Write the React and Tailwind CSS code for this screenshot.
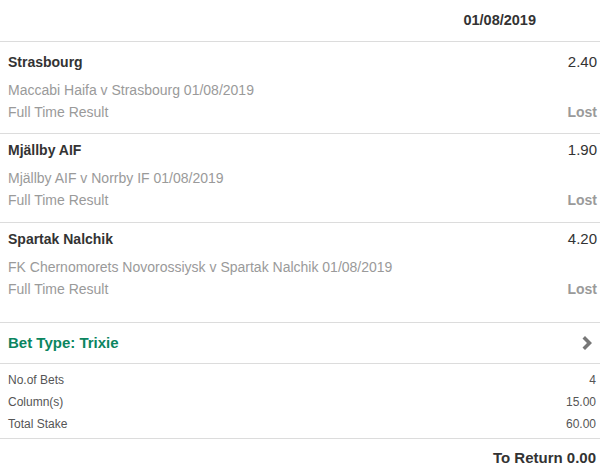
import React from "react";

const SELECTIONS = [
  {
    name: "Strasbourg",
    odds: "2.40",
    event: "Maccabi Haifa v Strasbourg 01/08/2019",
    market: "Full Time Result",
    result: "Lost",
    pad: "pt-[10px] pb-[11px]",
  },
  {
    name: "Mjällby AIF",
    odds: "1.90",
    event: "Mjällby AIF v Norrby IF 01/08/2019",
    market: "Full Time Result",
    result: "Lost",
    pad: "pt-[6px] pb-[12px]",
  },
  {
    name: "Spartak Nalchik",
    odds: "4.20",
    event: "FK Chernomorets Novorossiysk v Spartak Nalchik 01/08/2019",
    market: "Full Time Result",
    result: "Lost",
    pad: "pt-[6px] pb-[23px]",
  },
];

const STATS = [
  { label: "No.of Bets", value: "4" },
  { label: "Column(s)", value: "15.00" },
  { label: "Total Stake", value: "60.00" },
];

const Chevron = () => (
  <svg width="10" height="14" viewBox="0 0 10 14" className="mr-[4px]">
    <path d="M0.5 2.5 L3 0 L10 7 L3 14 L0.5 11.5 L5 7 Z" fill="#777" />
  </svg>
);

const Selection = ({ item }) => {
  return (
    <div className={`border-b border-[#dcdcdc] pl-[8px] pr-[3px] ${item.pad}`}>
      <div className="flex items-baseline justify-between h-[20px] leading-[20px]">
        <p className="text-[14px] font-bold text-[#333]">{item.name}</p>
        <p className="text-[15px] text-[#333]">{item.odds}</p>
      </div>
      <p className="mt-[8px] h-[20px] leading-[20px] text-[14px] text-[#9a9a9a]">
        {item.event}
      </p>
      <div className="mt-[2px] flex justify-between h-[20px] leading-[20px]">
        <p className="text-[14px] text-[#9a9a9a]">{item.market}</p>
        <p className="text-[14px] font-bold text-[#9a9a9a]">{item.result}</p>
      </div>
    </div>
  );
};

export default function App() {
  return (
    <div
      className="w-[600px] h-[467px] bg-white overflow-hidden"
      style={{ fontFamily: '"Liberation Sans", Arial, sans-serif' }}>
      {/* header */}
      <div className="h-[42px] border-b border-[#dcdcdc] flex justify-end pr-[64px] pt-[10px]">
        <p className="text-[14.5px] leading-[20px] font-bold text-[#333]">
          01/08/2019
        </p>
      </div>

      {SELECTIONS.map(s => (
        <Selection key={s.name} item={s} />
      ))}

      {/* bet type */}
      <div className="h-[41px] border-b border-[#dcdcdc] flex items-center justify-between pl-[8px] pr-[4px]">
        <p className="text-[15px] leading-[20px] font-bold text-[#0b8560]">
          Bet Type: Trixie
        </p>
        <Chevron />
      </div>

      {/* stats */}
      <div className="border-b border-[#dcdcdc] pt-[5px] pb-[3px] pl-[8px] pr-[4px]">
        {STATS.map(s => (
          <div
            key={s.label}
            className="flex justify-between h-[22px] leading-[22px] text-[12px] text-[#555]">
            <span>{s.label}</span>
            <span>{s.value}</span>
          </div>
        ))}
      </div>

      <div className="flex justify-end pt-[9px] pr-[4px]">
        <p className="text-[15px] leading-[20px] font-bold text-[#333]">
          To Return 0.00
        </p>
      </div>
    </div>
  );
}
